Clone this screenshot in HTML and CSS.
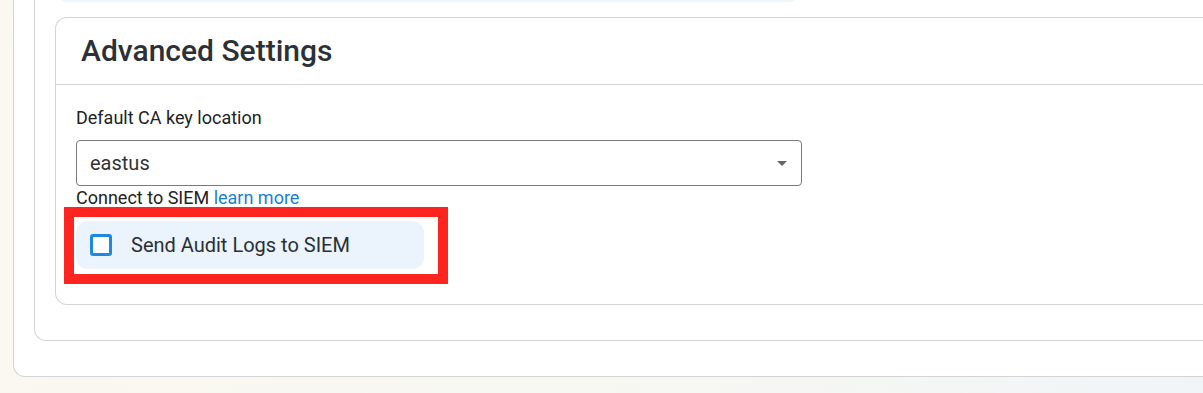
FILE: index.html
```html
<!DOCTYPE html>
<html lang="en">
<head>
<meta charset="utf-8">
<title>Advanced Settings</title>
<link rel="stylesheet" href="styles.css">
</head>
<body>
<div class="page">
  <div class="outer">
    <div class="middle">
      <div class="strip"></div>
      <section class="card">
        <header class="card-header">
          <h2 class="card-title">Advanced Settings</h2>
        </header>
        <div class="card-body">
          <label class="field-label">Default CA key location</label>
          <div class="select">
            <span class="select-value">eastus</span>
            <span class="select-arrow"></span>
          </div>
          <p class="siem-note">Connect to SIEM <a class="link" href="#">learn more</a></p>
          <div class="highlight">
            <div class="check-row">
              <span class="checkbox"></span>
              <span class="check-label">Send Audit Logs to SIEM</span>
            </div>
          </div>
        </div>
      </section>
    </div>
  </div>
</div>
</body>
</html>
```

FILE: styles.css
```css
html, body {
  margin: 0;
  padding: 0;
}

body {
  font-family: Roboto, "Liberation Sans", Arial, sans-serif;
  overflow: hidden;
}

.page {
  width: 1203px;
  height: 393px;
  overflow: hidden;
  background: linear-gradient(100deg, #faf8f0 0%, #f7f7f2 55%, #f1f5f8 100%);
}

.outer {
  margin-top: -60px;
  margin-left: 13px;
  width: 1300px;
  background: #fff;
  border: 1px solid #d4d4d4;
  border-right: none;
  border-radius: 12px 0 0 12px;
  padding: 20px 0 35px 20px;
}

.middle {
  background: #fff;
  border: 1px solid #d4d4d4;
  border-right: none;
  border-radius: 12px 0 0 12px;
  padding: 0 0 35px 20px;
}

.strip {
  margin-left: 5px;
  width: 735px;
  height: 40px;
  background: #eef5fd;
  border-radius: 0 0 5px 5px;
}

.card {
  margin-top: 15px;
  border: 1px solid #d4d4d4;
  border-right: none;
  border-radius: 12px 0 0 12px;
  background: #fff;
}

.card-header {
  height: 66px;
  display: flex;
  align-items: center;
  padding-left: 25px;
  border-bottom: 1px solid #d4d4d4;
}

.card-title {
  margin: 0;
  font-size: 30px;
  font-weight: 500;
  color: #2c3138;
  line-height: 1;
}

.card-body {
  padding: 22px 0 20px 20px;
}

.field-label {
  display: block;
  font-size: 18px;
  line-height: 21px;
  color: #222;
}

.select {
  margin-top: 12px;
  width: 726px;
  height: 46px;
  box-sizing: border-box;
  border: 1px solid #7a7a7a;
  border-radius: 4px;
  display: flex;
  align-items: center;
  justify-content: space-between;
  padding: 0 14px 0 13px;
}

.select-value {
  font-size: 20px;
  color: #333;
}

.select-arrow {
  width: 0;
  height: 0;
  border-left: 5px solid transparent;
  border-right: 5px solid transparent;
  border-top: 5px solid #666;
}

.siem-note {
  margin: 2px 0 0;
  font-size: 18px;
  line-height: 19px;
  color: #222;
}

.link {
  color: #1a7fd4;
  text-decoration: none;
}

.highlight {
  margin-left: -12px;
  width: fit-content;
  border: 10px solid #fe2521;
  padding: 4px 14px 5px 2px;
}

.check-row {
  width: 348px;
  height: 48px;
  box-sizing: border-box;
  background: #ebf3fc;
  border-radius: 12px;
  display: flex;
  align-items: center;
  gap: 19px;
  padding-left: 14px;
}

.checkbox {
  width: 22px;
  height: 22px;
  box-sizing: border-box;
  border: 3px solid #1e88e5;
  border-radius: 3px;
  background: #fff;
}

.check-label {
  font-size: 20px;
  color: #2a2f36;
}
```
